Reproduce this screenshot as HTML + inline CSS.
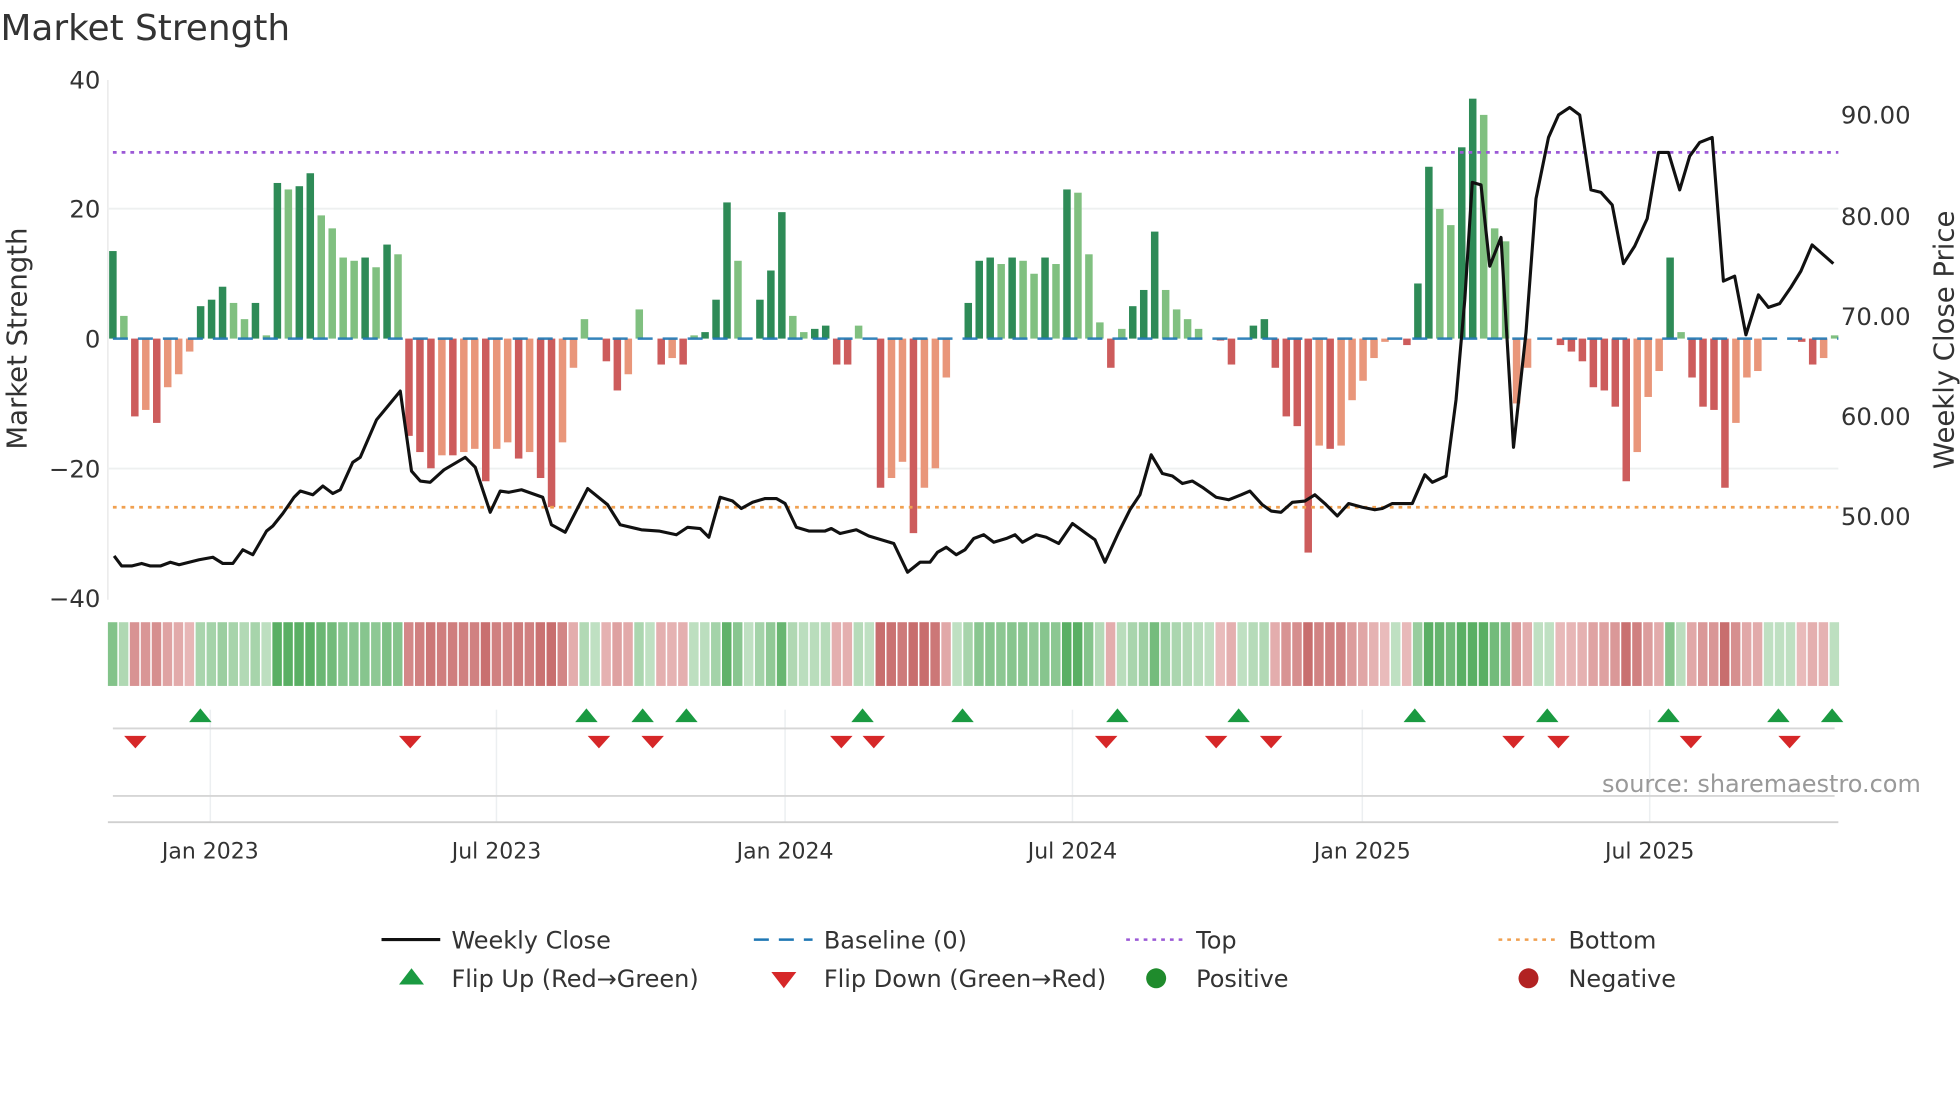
<!DOCTYPE html>
<html><head><meta charset="utf-8"><style>
html,body{margin:0;padding:0;background:#fff;width:1960px;height:1102px;overflow:hidden}
svg{display:block}
text{font-family:"DejaVu Sans","Liberation Sans",sans-serif}
</style></head><body>
<svg id="s" width="1960" height="1102" viewBox="0 0 1568 882" xmlns="http://www.w3.org/2000/svg">
<rect width="1568" height="882" fill="#fff"/>
<text x="0" y="32" font-size="28.7" fill="#333">Market Strength</text>
<g id="grid"></g>
<line x1="86" y1="64" x2="86" y2="480" stroke="#e6e6e6"/>
<line x1="86" y1="167" x2="1471" y2="167" stroke="#eef0f0" stroke-width="1.5"/>
<line x1="86" y1="375" x2="1471" y2="375" stroke="#eef0f0" stroke-width="1.5"/>
<g id="bars"></g>
<line x1="90" y1="271" x2="1471" y2="271" stroke="#1f77b4" stroke-width="2" stroke-dasharray="12,8" opacity="0.9"/>
<line x1="90" y1="122" x2="1471" y2="122" stroke="#9b59d6" stroke-width="2.2" stroke-dasharray="3,4"/>
<line x1="90" y1="406" x2="1471" y2="406" stroke="#f0a050" stroke-width="2.2" stroke-dasharray="3,4"/>
<polyline id="price" fill="none" stroke="#111" stroke-width="2.5" stroke-linejoin="round"/>
<g font-size="19.5" fill="#333" text-anchor="end">
<text x="80" y="71">40</text><text x="80" y="174">20</text><text x="80" y="278">0</text>
<text x="80" y="382">−20</text><text x="80" y="486">−40</text>
</g>
<g font-size="19.5" fill="#333">
<text x="1473" y="99">90.00</text><text x="1473" y="180">80.00</text><text x="1473" y="260">70.00</text>
<text x="1473" y="340">60.00</text><text x="1473" y="420">50.00</text>
</g>
<text transform="translate(21,271) rotate(-90)" font-size="22" fill="#333" text-anchor="middle">Market Strength</text>
<text transform="translate(1563,272) rotate(-90)" font-size="22" fill="#333" text-anchor="middle">Weekly Close Price</text>
<g id="heat"></g>
<line x1="90" y1="583" x2="1468" y2="583" stroke="#d6d6d6" stroke-width="1.5"/>
<line x1="90" y1="637" x2="1468" y2="637" stroke="#d6d6d6" stroke-width="1.5"/>
<line x1="86" y1="658" x2="1471" y2="658" stroke="#d0d0d0" stroke-width="1.5"/>
<g id="flips"></g>
<text x="1537" y="634" font-size="19.2" fill="#999" text-anchor="end">source: sharemaestro.com</text>
<g font-size="17.6" fill="#333" text-anchor="middle">
<text x="168" y="687">Jan 2023</text><text x="397" y="687">Jul 2023</text><text x="628" y="687">Jan 2024</text>
<text x="858" y="687">Jul 2024</text><text x="1090" y="687">Jan 2025</text><text x="1320" y="687">Jul 2025</text>
</g>
<g font-size="19.2" fill="#333">
<line x1="305" y1="752" x2="352" y2="752" stroke="#111" stroke-width="2.5"/><text x="361" y="759">Weekly Close</text>
<line x1="603" y1="752" x2="650" y2="752" stroke="#1f77b4" stroke-width="2" stroke-dasharray="12,8"/><text x="659" y="759">Baseline (0)</text>
<line x1="901" y1="752" x2="948" y2="752" stroke="#9b59d6" stroke-width="2" stroke-dasharray="3,4"/><text x="957" y="759">Top</text>
<line x1="1199" y1="752" x2="1246" y2="752" stroke="#f0a050" stroke-width="2" stroke-dasharray="3,4"/><text x="1255" y="759">Bottom</text>
<polygon points="319,788 329,775 339,788" fill="#1a9a41"/><text x="361" y="790">Flip Up (Red→Green)</text>
<polygon points="617,778 627,791 637,778" fill="#d62728"/><text x="659" y="790">Flip Down (Green→Red)</text>
<circle cx="925" cy="783" r="8" fill="#1f8b2c"/><text x="957" y="790">Positive</text>
<circle cx="1223" cy="783" r="8" fill="#b22222"/><text x="1255" y="790">Negative</text>
</g>
</svg>
<script>
var NS="http://www.w3.org/2000/svg";
function el(p,t,a){var e=document.createElementNS(NS,t);for(var k in a)e.setAttribute(k,a[k]);document.getElementById(p).appendChild(e);return e;}
[168,397,628,858,1090,1320].forEach(function(x){el("grid","line",{x1:x,y1:568,x2:x,y2:658,stroke:"#eceff1","stroke-width":1.2});});
var v=[13.5,3.5,-12,-11,-13,-7.5,-5.5,-2,5,6,8,5.5,3,5.5,0.5,24,23,23.5,25.5,19,17,12.5,12,12.5,11,14.5,13,
-15,-17.5,-20,-18,-18,-17.5,-17,-22,-17,-16,-18.5,-17.5,-21.5,-26,-16,-4.5,3,0,-3.5,-8,-5.5,4.5,0,-4,-3,-4,0.5,1,6,21,12,0,
6,10.5,19.5,3.5,1,1.5,2,-4,-4,2,0,-23,-21.5,-19,-30,-23,-20,-6,0,5.5,12,12.5,11.5,12.5,12,10,12.5,11.5,23,22.5,13,2.5,-4.5,
1.5,5,7.5,16.5,7.5,4.5,3,1.5,0,-0.3,-4,0,2,3,-4.5,-12,-13.5,-33,-16.5,-17,-16.5,-9.5,-6.5,-3,-0.5,0,-1,8.5,26.5,20,17.5,29.5,37,34.5,17,15,
-10,-4.5,0,0,-1,-2,-3.5,-7.5,-8,-10.5,-22,-17.5,-9,-5,12.5,1,-6,-10.5,-11,-23,-13,-6,-5,0,0,0,-0.5,-4,-3,0.5];
var n=v.length, x0=90, dx=(1468-90)/(n-1);
for(var i=0;i<n;i++){var x=x0+i*dx,val=v[i],prev=i?v[i-1]:0;
 var dark=Math.abs(val)>=Math.abs(prev);
 var c=val>=0?(dark?"#2e8b57":"#80c080"):(dark?"#cd5c5c":"#e9967a");
 var h=Math.abs(val)*5.19;
 if(h>0.5) el("bars","rect",{x:x-3,y:val>=0?271-h:271,width:6,height:h,fill:c});
 var a=Math.min(1,0.25+Math.abs(val)/30);
 var hc;
 if(val>=0){var t=a;hc="rgb("+Math.round(225-(225-90)*t)+","+Math.round(240-(240-175)*t)+","+Math.round(225-(225-100)*t)+")";}
 else{var t=a;hc="rgb("+Math.round(245-(245-200)*t)+","+Math.round(215-(215-110)*t)+","+Math.round(215-(215-110)*t)+")";}
 el("heat","rect",{x:x-4,y:498,width:dx-1.2,height:51,fill:hc});
}
var p=[[91,445],[97,453],[105,453],[113,451],[120,453],[128,453],[136,450],[143,452],[151,450],[159,448],[170,446],[178,451],[186,451],[194,440],[202,444],[213,425],[218,421],[226,411],[235,398],[240,393],[250,396],[258,389],[266,395],[272,392],[282,370],[288,366],[301,336],[320,313],[329,377],[336,385],[344,386],[355,376],[372,366],[380,374],[392,410],[400,393],[407,394],[417,392],[434,398],[441,420],[452,426],[470,391],[486,404],[496,420],[513,424],[527,425],[541,428],[550,422],[560,423],[567,430],[576,398],[586,401],[593,407],[602,402],[612,399],[621,399],[628,403],[637,422],[647,425],[660,425],[665,423],[672,427],[685,424],[695,429],[715,435],[726,458],[736,450],[744,450],[750,442],[757,438],[765,444],[772,440],[779,431],[787,428],[795,434],[805,431],[812,428],[818,434],[829,428],[837,430],[847,435],[858,419],[869,427],[876,432],[884,450],[895,426],[904,408],[912,396],[921,364],[930,379],[938,381],[946,387],[954,385],[962,390],[973,398],[983,400],[993,396],[1000,393],[1010,404],[1017,409],[1025,410],[1034,402],[1044,401],[1052,396],[1060,403],[1070,413],[1079,403],[1090,406],[1100,408],[1106,407],[1114,403],[1130,403],[1140,380],[1146,386],[1157,381],[1165,320],[1172,240],[1178,146],[1185,148],[1192,213],[1201,190],[1211,358],[1221,266],[1229,159],[1239,110],[1247,92],[1256,86],[1264,92],[1273,152],[1281,154],[1290,164],[1299,211],[1308,197],[1318,175],[1327,122],[1335,122],[1344,152],[1352,125],[1360,114],[1370,110],[1379,225],[1388,221],[1397,268],[1407,236],[1415,246],[1424,243],[1433,230],[1441,217],[1450,196],[1467,211]];
document.getElementById("price").setAttribute("points",p.map(function(q){return q.join(",")}).join(" "));
[160,469,514,549,690,770,894,991,1132,1238,1335,1423,1466].forEach(function(x){el("flips","polygon",{points:(x-9)+",578 "+x+",567 "+(x+9)+",578",fill:"#1a9a41"});});
[108,328,479,522,673,699,885,973,1017,1211,1247,1353,1432].forEach(function(x){el("flips","polygon",{points:(x-9)+",589 "+x+",599 "+(x+9)+",589",fill:"#d62728"});});
</script>
</body></html>
